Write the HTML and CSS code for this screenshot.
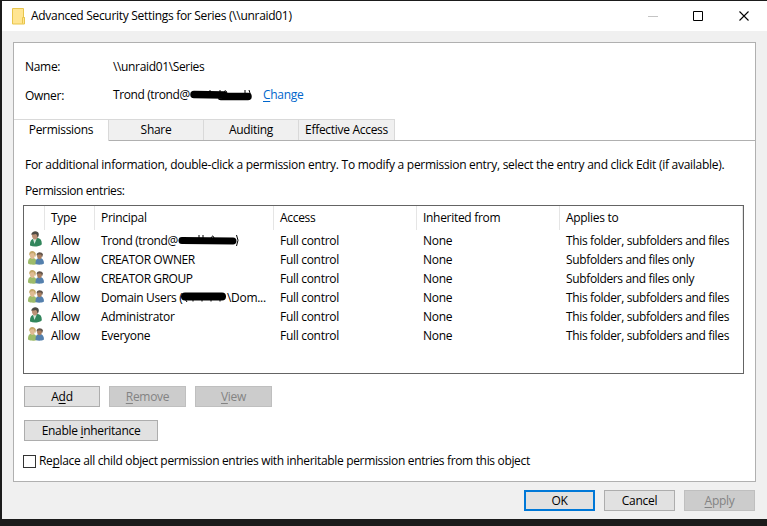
FILE: index.html
```
<!DOCTYPE html>
<html lang="en">
    <head>
        <meta charset="utf-8">
        <title>Advanced Security Settings for Series</title>
        <link rel="stylesheet" href="styles.css">
    </head>

    <body>
        <svg class="defs" width="0" height="0">
            <symbol id="user" viewBox="0 0 16 16">
                <path d="M2 14.500C1.800 10.500 3 8.200 6 7.500l4-.5c3 .6 4 3 3.700 6.500-3 2.300-8 2.800-11.700 1z" fill="#32865c"/>
                <path d="M5 8l1.500 5L8.500 8z" fill="#d5e6dc"/>
                <path d="M3.800 3.500c0-3.500 6.500-3 6.200.7 0 2.300-1.300 4.300-3 4.300s-3.200-2-3.200-5z" fill="#bb9176"/>
                <path d="M3.300 3.700C3.500-.8 10.500-1 10.800 3c0 1.800-.5 3-1.300 3.800C9.300 5 9 4 8 3c-1.500.6-3 .3-4.700.7z" fill="#4c4a43"/>
            </symbol>
            <symbol id="group" viewBox="0 0 16 16">
                <path d="M0 13.500C0 9.500 1 7.800 4 7.800s5 2 5 6.200c-2 1-7 1-9-.5z" fill="#9dbb6a"/>
                <path d="M7.500 14c0-4 1-6 4-6s4.500 2 4.500 5.500c-2 1.500-6 1.500-8.500.5z" fill="#5480ad"/>
                <path d="M1.700 4.500C1.700.5 7 .5 7 4.500c0 3-1.300 4.500-2.700 4.500S1.700 7 1.700 4.500z" fill="#dfbb93"/>
                <path d="M1.200 5.500C.5 0 6.500 0 7.800 3.500L7.500 7C6.500 6 6.500 4 5.500 3 4 3.500 3 3 2.200 4z" fill="#c4a768"/>
                <path d="M9 5.500c0-3.500 5-3.500 5 0 0 2.300-1.200 3.700-2.500 3.700S9 7.800 9 5.500z" fill="#a87e60"/>
                <path d="M8.600 5.500C8 1.500 14 1 15 4.500L14.200 7c-.7-.8-.5-2-1.200-2.500-1.500.3-2.500-.2-3.500.6z" fill="#62544a"/>
            </symbol>
        </svg>

        <div class="window">
            <div class="titlebar">
                <svg class="folder" width="14" height="17" viewBox="0 0 14 17">
                    <path d="M.5.500h11v9h1v6.500H.5z" fill="#ffe592" stroke="#e8c54b"/>
                    <path d="M10.500 15.500v-6h2" fill="none" stroke="#e8c54b"/>
                </svg>
                <span class="caption">Advanced Security Settings for Series (\\unraid01)</span>
                <svg class="controls" width="101" height="12" viewBox="0 0 101 12" fill="none">
                    <path d="M0 6.500h10" stroke="#c4c4c4"/>
                    <path d="M45.500 1.500h9v9h-9z" stroke="#000"/>
                    <path d="M91.500 1.500l9 9M100.500 1.500l-9 9" stroke="#000" stroke-width="1.100"/>
                </svg>
            </div>

            <div class="panel">
                <div class="field">
                    <span class="label">Name:</span>
                    <span class="name">\\unraid01\Series</span>
                </div>
                <div class="field owner">
                    <span class="label">Owner:</span>
                    <span class="trond">Trond (trond@</span>
                    <svg class="scribble" width="62" height="12" viewBox="0 0 62 12">
                        <path d="M4 4.500L34 5M31 6.500L58 6.500" stroke="#000" stroke-width="7.500" stroke-linecap="round"/>
                        <path d="M20 0v3M30 0v3M34 1.500q2-2 3 1M55 0v3M59 0q3 5 0 9" fill="none" stroke="#000"/>
                    </svg>
                    <a class="change" href="#"><u>C</u>hange</a>
                </div>

                <div class="tabs">
                    <div class="tab active"><span>Permissions</span></div>
                    <div class="tab"><span>Share</span></div>
                    <div class="tab"><span>Auditing</span></div>
                    <div class="tab"><span>Effective Access</span></div>
                </div>

                <div class="content">
                    <p class="info">For additional information, double-click a permission entry. To modify a permission entry, select the entry and click Edit (if available).</p>
                    <p class="entries-label">Permission entries:</p>

                    <div class="list">
                        <div class="row head">
                            <span></span><span>Type</span><span>Principal</span><span>Access</span><span>Inherited from</span><span>Applies to</span>
                        </div>
                        <div class="row">
                            <svg class="icon"><use href="#user"/></svg>
                            <span>Allow</span>
                            <span class="cut"><span class="trond">Trond (trond@</span><svg class="scribble" width="62" height="12" viewBox="0 0 62 12">
                                <path d="M4 5.500L55 6" stroke="#000" stroke-width="7" stroke-linecap="round"/>
                                <path d="M21 0v3M25 0v3M33 3q2-4 3 0M58.500 0q3 5 0 11" fill="none" stroke="#000"/>
                            </svg></span>
                            <span>Full control</span><span>None</span><span class="scope">This folder, subfolders and files</span>
                        </div>
                        <div class="row">
                            <svg class="icon"><use href="#group"/></svg>
                            <span>Allow</span><span class="caps">CREATOR OWNER</span><span>Full control</span><span>None</span><span class="scope">Subfolders and files only</span>
                        </div>
                        <div class="row">
                            <svg class="icon"><use href="#group"/></svg>
                            <span>Allow</span><span class="caps">CREATOR GROUP</span><span>Full control</span><span>None</span><span class="scope">Subfolders and files only</span>
                        </div>
                        <div class="row">
                            <svg class="icon"><use href="#group"/></svg>
                            <span>Allow</span>
                            <span class="cut"><span class="domain">Domain Users (</span><svg class="scribble" width="47" height="12" viewBox="0 0 47 12">
                                <path d="M5 4.500L42 4.500" stroke="#000" stroke-width="8" stroke-linecap="round"/>
                                <path d="M5 7l2 3M13 7v2.500M22 7v2.500M31 7v2.500M40 7v2.500" stroke="#000"/>
                            </svg><span>\Dom...</span></span>
                            <span>Full control</span><span>None</span><span class="scope">This folder, subfolders and files</span>
                        </div>
                        <div class="row">
                            <svg class="icon"><use href="#user"/></svg>
                            <span>Allow</span><span>Administrator</span><span>Full control</span><span>None</span><span class="scope">This folder, subfolders and files</span>
                        </div>
                        <div class="row">
                            <svg class="icon"><use href="#group"/></svg>
                            <span>Allow</span><span>Everyone</span><span>Full control</span><span>None</span><span class="scope">This folder, subfolders and files</span>
                        </div>
                    </div>

                    <div class="buttons">
                        <button class="add">A<u>d</u>d</button>
                        <button disabled><u>R</u>emove</button>
                        <button disabled><u>V</u>iew</button>
                    </div>
                    <button class="inherit">Enable <u>i</u>nheritance</button>

                    <label class="replace">
                        <input type="checkbox">
                        <span>Re<u>p</u>lace all child object permission entries with inheritable permission entries from this object</span>
                    </label>
                </div>
            </div>

            <div class="footer">
                <button class="ok">OK</button>
                <button>Cancel</button>
                <button disabled><u>A</u>pply</button>
            </div>
        </div>
    </body>
</html>
```
FILE: styles.css
```
* {
    box-sizing: border-box;
}
body {
    margin: 0;
    height: 526px;
    padding: 1px 0 7px 2px;
    background: #1b1b1b;
    font: 12px/18px "Open Sans", "Noto Sans", sans-serif;
    letter-spacing: -0.3px;
    color: #000;
    white-space: nowrap;
    overflow: hidden;
}
p {
    margin: 0;
}
u {
    text-decoration: underline;
    text-underline-offset: 2px;
    text-decoration-skip-ink: none;
}
.defs {
    position: absolute;
}
.window {
    height: 518px;
    background: #f0f0f0;
}
.titlebar {
    display: flex;
    align-items: center;
    height: 30px;
    padding-left: 10px;
    background: white;
}
.caption {
    margin-left: 5px;
}
.controls {
    margin-left: auto;
    margin-right: 18px;
}
.panel {
    width: 743px;
    height: 440px;
    margin: 11px 0 0 11px;
    padding-top: 15px;
    border: 1px solid #b0b0b0;
    background: white;
}
.field {
    display: flex;
    height: 18px;
    padding-left: 11px;
}
.label {
    width: 88px;
}
.name {
    letter-spacing: -0.35px;
}
.owner {
    margin-top: 10px;
}
.owner .label {
    padding-top: 1px;
}
.field .trond {
    width: 77px;
}
.trond {
    letter-spacing: -0.4px;
}
.field .scribble {
    margin-top: 4px;
}
.change {
    margin-left: 11px;
    color: #0066cc;
    text-decoration: none;
}
.scribble {
    flex: none;
}
.tabs {
    display: flex;
    height: 22px;
    margin-top: 15px;
    border-bottom: 1px solid #b0b0b0;
}
.tab {
    width: 95px;
    height: 21px;
    border-top: 1px solid #d9d9d9;
    border-right: 1px solid #d9d9d9;
    background: #f0f0f0;
    line-height: 20px;
    text-align: center;
}
.tab:last-child {
    width: 96px;
}
.tab.active {
    height: 22px;
    background: white;
}
.content {
    padding: 15px 11px 0 9px;
}
.info, .entries-label {
    padding-left: 2px;
}
.info {
    letter-spacing: -0.277px;
}
.entries-label {
    margin-top: 8px;
    letter-spacing: -0.4px;
}
.list {
    width: 721px;
    height: 169px;
    margin-top: 5px;
    border: 1px solid #646464;
}
.row {
    display: grid;
    grid-template-columns: 21px 50px 179px 143px 143px 183px;
    height: 19px;
    line-height: 21px;
}
.row > span {
    padding-left: 6px;
}
.head {
    height: 24px;
    line-height: 24px;
}
.head > span {
    border-right: 1px solid #e5e5e5;
}
.icon {
    width: 16px;
    height: 16px;
    margin: 1px 0 0 4px;
}
.scope {
    letter-spacing: -0.36px;
}
.caps {
    letter-spacing: -0.42px;
}
.cut {
    display: flex;
}
.cut .trond {
    width: 77px;
}
.cut .scribble {
    margin-top: 5px;
}
.cut .domain {
    width: 79px;
}
button {
    width: 77px;
    height: 21px;
    padding: 0;
    border: 1px solid #adadad;
    background: #e1e1e1;
    color: #000;
    font: inherit;
    letter-spacing: inherit;
    line-height: 19px;
}
button:disabled {
    border-color: #bfbfbf;
    background: #cccccc;
    color: #838383;
}
.buttons {
    display: flex;
    gap: 9px;
    margin: 12px 0 13px 1px;
}
.buttons .add {
    width: 76px;
}
.inherit {
    display: block;
    width: 134px;
    margin-left: 1px;
}
.replace {
    display: flex;
    height: 18px;
    margin-top: 11px;
    letter-spacing: -0.335px;
}
.replace input {
    appearance: none;
    width: 13px;
    height: 13px;
    margin: 3px 3px 0 0;
    border: 1px solid #333;
    background: white;
}
.footer {
    display: flex;
    justify-content: flex-end;
    gap: 9px;
    padding: 8px 12px 0 0;
}
.footer button {
    width: 71px;
}
.footer .ok {
    border: 2px solid #0078d7;
    line-height: 17px;
}
```
